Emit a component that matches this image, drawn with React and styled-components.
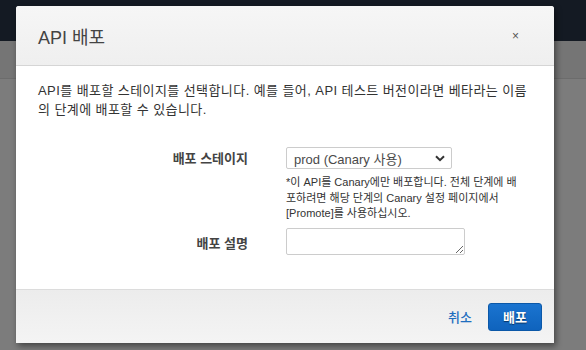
import styled, { createGlobalStyle } from "styled-components";

const GlobalStyle = createGlobalStyle`
  html, body {
    margin: 0;
    padding: 0;
  }
  body {
    font-family: "Liberation Sans", "Noto Sans CJK KR", sans-serif;
    background: #7c7c7c;
  }
`;

const Page = styled.div`
  position: relative;
  width: 586px;
  height: 350px;
  overflow: hidden;
  display: flex;
  flex-direction: column;
`;

const NavBar = styled.div`
  height: 41px;
  background: #141a23;
`;

const SubBar = styled.div`
  height: 37px;
  background: #757575;
  border-bottom: 1px solid #6c6c6c;
`;

const PageRest = styled.div`
  flex: 1;
  background: #7c7c7c;
`;

const Modal = styled.div`
  position: absolute;
  left: 16px;
  top: 6px;
  width: 538px;
  height: 337px;
  display: flex;
  flex-direction: column;
  background: #fff;
  border-radius: 3px 3px 0 0;
  box-shadow: 2px 3px 6px rgba(0, 0, 0, 0.45);
`;

const Header = styled.div`
  height: 59px;
  display: flex;
  align-items: center;
  justify-content: space-between;
  padding: 0 35px 0 22px;
  background: linear-gradient(#f6f6f6, #efefef);
  border-bottom: 1px solid #d5d5d5;
  border-radius: 3px 3px 0 0;
`;

const Title = styled.h2`
  margin: 0;
  font-size: 18px;
  font-weight: 400;
  color: #444;
`;

const Close = styled.span`
  font-size: 12px;
  color: #555;
`;

const Body = styled.div`
  flex: 1;
  padding: 15px 22px 0 22px;
  color: #333;
`;

const Intro = styled.p`
  margin: 0;
  font-size: 13px;
  line-height: 19px;
  letter-spacing: 0.42px;
`;

const Form = styled.div`
  margin-top: 28px;
  display: grid;
  grid-template-columns: 210px 240px;
  column-gap: 38px;
  row-gap: 6px;
`;

const Label = styled.label`
  text-align: right;
  font-size: 13px;
  font-weight: 700;
  color: #444;
  padding-top: ${(p) => p.$offset || 1}px;
`;

const Field = styled.div`
  display: flex;
  flex-direction: column;
`;

const SelectBox = styled.div`
  width: 166px;
  height: 22px;
  box-sizing: border-box;
  border: 1px solid #ccc;
  border-radius: 2px;
  display: flex;
  align-items: center;
  justify-content: space-between;
  padding: 0 6px 0 7px;
  font-size: 13px;
  color: #4a4a4a;
`;

const Help = styled.div`
  margin-top: 6px;
  font-size: 11px;
  line-height: 15.5px;
  color: #333;
`;

const TextArea = styled.textarea`
  width: 179px;
  height: 27px;
  box-sizing: border-box;
  border: 1px solid #ccc;
  border-radius: 2px;
  margin: 0;
`;

const Footer = styled.div`
  height: 54px;
  box-sizing: border-box;
  border-top: 1px solid #dcdcdc;
  background: linear-gradient(#ececec, #f4f4f4);
  display: flex;
  align-items: center;
  justify-content: flex-end;
  gap: 16px;
  padding: 0 12px 0 0;
`;

const LinkButton = styled.span`
  font-size: 13px;
  font-weight: 500;
  color: #1f6ebf;
`;

const PrimaryButton = styled.button`
  width: 54px;
  height: 28px;
  border: 1px solid #0b58a8;
  border-radius: 3px;
  background: linear-gradient(#1a74d0, #0f63bd);
  color: #fff;
  font-family: inherit;
  font-size: 13px;
  font-weight: 700;
  text-shadow: 0 1px 1px rgba(0, 0, 0, 0.5);
`;

const Chevron = () => (
  <svg width="10" height="7" viewBox="0 0 10 7">
    <path d="M1 1.2 L5 5.2 L9 1.2" fill="none" stroke="#333" strokeWidth="2" />
  </svg>
);

export default function App() {
  return (
    <>
      <GlobalStyle />
      <Page>
        <NavBar />
        <SubBar />
        <PageRest />
        <Modal>
          <Header>
            <Title>API 배포</Title>
            <Close>×</Close>
          </Header>
          <Body>
            <Intro>
              API를 배포할 스테이지를 선택합니다. 예를 들어, API 테스트 버전이라면 베타라는 이름의 단계에 배포할 수 있습니다.
            </Intro>
            <Form>
              <Label>배포 스테이지</Label>
              <Field>
                <SelectBox>
                  <span>prod (Canary 사용)</span>
                  <Chevron />
                </SelectBox>
                <Help>
                  *이 API를 Canary에만 배포합니다. 전체 단계에 배포하려면 해당 단계의 Canary 설정 페이지에서 [Promote]를 사용하십시오.
                </Help>
              </Field>
              <Label $offset={5}>배포 설명</Label>
              <Field>
                <TextArea />
              </Field>
            </Form>
          </Body>
          <Footer>
            <LinkButton>취소</LinkButton>
            <PrimaryButton>배포</PrimaryButton>
          </Footer>
        </Modal>
      </Page>
    </>
  );
}
